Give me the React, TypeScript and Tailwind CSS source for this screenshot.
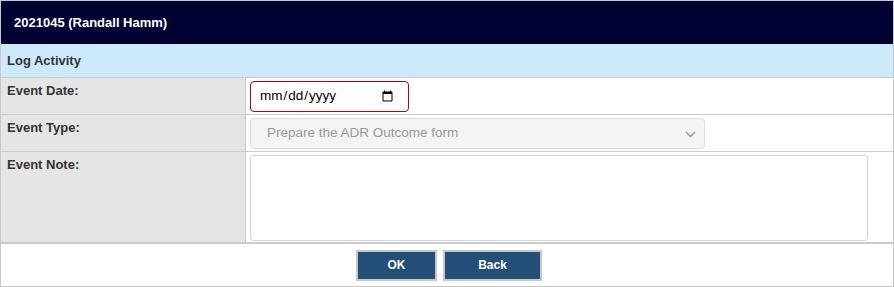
import React from "react";

export default function App() {
  return (
    <div className="w-[894px] h-[287px] bg-white" style={{ fontFamily: '"Liberation Sans", Arial, sans-serif' }}>
      <div className="w-[894px] h-[287px] border border-[#c8c8c8] flex flex-col">
        <div className="h-[43px] bg-[#000033] flex items-center pl-[13px] text-white font-bold text-[13px]">
          2021045 (Randall Hamm)
        </div>
        <div className="h-[34px] bg-[#cceafc] flex items-center pl-[6px] text-[#333] font-bold text-[13px] border-b border-[#cccccc]">
          Log Activity
        </div>
        <div className="flex h-[37px] border-b border-[#cccccc]">
          <div className="w-[245px] bg-[#e5e5e5] border-r border-[#cccccc] pl-[6px] pt-[3px] text-[13px] font-bold text-[#333]">
            Event Date:
          </div>
          <div className="flex-1 pl-[4px] pt-[3px]">
            <input
              type="date"
              className="w-[159px] h-[31px] border border-[#c00000] rounded-[4px] pl-[8px] pr-[12px] text-[13.5px] text-black bg-white outline-none"
            />
          </div>
        </div>
        <div className="flex h-[37px] border-b border-[#cccccc]">
          <div className="w-[245px] bg-[#e5e5e5] border-r border-[#cccccc] pl-[6px] pt-[3px] text-[13px] font-bold text-[#333]">
            Event Type:
          </div>
          <div className="flex-1 pl-[4px] pt-[3px]">
            <div className="relative w-[455px] h-[31px] border border-[#dddddd] rounded-[4px] bg-[#f4f4f4] flex items-center pl-[16px] text-[13.5px] text-[#999999]">
              Prepare the ADR Outcome form
              <svg className="absolute right-[8px] top-[12px]" width="11" height="7" viewBox="0 0 11 7">
                <path d="M1 1 L5.5 5.5 L10 1" fill="none" stroke="#a0a0a0" strokeWidth="1.6" />
              </svg>
            </div>
          </div>
        </div>
        <div className="flex h-[92px] border-b-2 border-[#cccccc]">
          <div className="w-[245px] bg-[#e5e5e5] border-r border-[#cccccc] pl-[6px] pt-[3px] text-[13px] font-bold text-[#333]">
            Event Note:
          </div>
          <div className="flex-1 pl-[4px] pt-[3px]">
            <textarea className="w-[618px] h-[86px] border border-[#d4d4d4] rounded-[3px] resize-none outline-none bg-white block" />
          </div>
        </div>
        <div className="flex-1 flex items-center justify-center gap-[6px] pl-[4px]">
          <button className="w-[81px] h-[31px] bg-[#224e78] border-2 border-[#c4c8cc] text-white font-bold text-[12px]">
            OK
          </button>
          <button className="w-[99px] h-[31px] bg-[#224e78] border-2 border-[#c4c8cc] text-white font-bold text-[12px]">
            Back
          </button>
        </div>
      </div>
    </div>
  );
}
